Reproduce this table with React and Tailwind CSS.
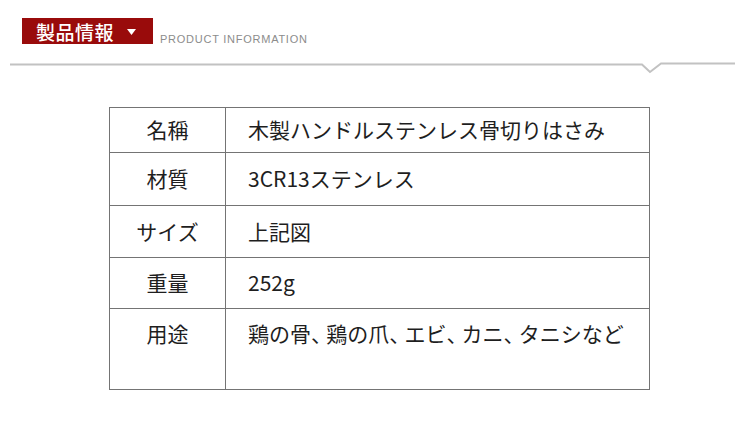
const ROWS = [
  { label: "名稱", value: "木製ハンドルステンレス骨切りはさみ", h: "h-[45px]" },
  { label: "材質", value: "3CR13ステンレス", h: "h-[53px]" },
  { label: "サイズ", value: "上記図", h: "h-[52px]" },
  { label: "重量", value: "252g", h: "h-[51px]" },
  { label: "用途", value: "鶏の骨、鶏の爪、エビ、カニ、タニシなど", h: "h-[81px]", top: true },
];

const jp = { fontFamily: '"Noto Sans CJK JP", "Noto Sans", sans-serif' };

// 読点を少し詰める
const tight = (text) =>
  text.split("、").flatMap((part, i, arr) =>
    i < arr.length - 1
      ? [part, <span key={i} className="tracking-[-5.8px]">、</span>]
      : [part]
  );

export default function App() {
  return (
    <div className="w-[750px] h-[421px] bg-white overflow-hidden" style={jp}>
      {/* 見出し */}
      <div className="flex items-end pt-[18px] pl-[22px]">
        <div className="w-[131px] h-[26px] bg-[#990b0b] flex items-center pl-[14px] text-white">
          <span className="text-[19px] leading-none font-medium tracking-[0.5px]">製品情報</span>
          <svg width="9" height="7" viewBox="0 0 9 7" className="ml-[13px] mt-[3px]">
            <polygon points="0,0 9,0 4.5,6" fill="#fff" />
          </svg>
        </div>
        <span
          className="ml-[7px] text-[11px] leading-none tracking-[0.75px] text-[#8c8c8c] mb-[-1px]"
          style={{ fontFamily: '"Liberation Sans", sans-serif' }}
        >
          PRODUCT INFORMATION
        </span>
      </div>

      <svg width="750" height="20" className="block mt-[12px]">
        <polyline
          points="10,8.5 642,8.5 650,16 661,7.5 735,7.5"
          fill="none"
          stroke="#c2c2c2"
          strokeWidth="2"
        />
      </svg>

      {/* 表 */}
      <div className="mt-[31px] ml-[109px] w-[541px] border-t border-l border-[#747474] text-[#1e1e1e]">
        {ROWS.map((r) => (
          <div key={r.label} className={`flex ${r.h}`}>
            <div
              className={`w-[116px] border-r border-b border-[#747474] flex justify-center text-[21px] ${
                r.top ? "items-start pt-[9px]" : "items-center"
              }`}
            >
              {r.label}
            </div>
            <div
              className={`w-[424px] border-r border-b border-[#747474] pl-[22px] text-[21px] ${
                r.top ? "pt-[9px]" : "flex items-center"
              }`}
            >
              <span>{tight(r.value)}</span>
            </div>
          </div>
        ))}
      </div>
    </div>
  );
}
